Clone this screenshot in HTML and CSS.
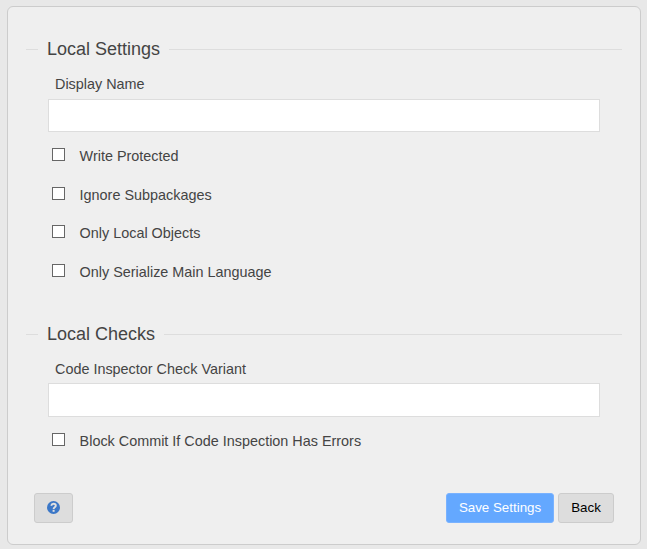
FILE: index.html
```html
<!DOCTYPE html>
<html lang="en">
<head>
  <meta charset="utf-8">
  <title>Local Settings</title>
  <link rel="stylesheet" href="styles.css">
</head>
<body>
  <form class="panel">
    <section class="group">
      <h2 class="legend">Local Settings</h2>
      <label class="field-label" for="display-name">Display Name</label>
      <input class="field" id="display-name" type="text">
      <div class="checks">
        <label class="check"><input type="checkbox">Write Protected</label>
        <label class="check"><input type="checkbox">Ignore Subpackages</label>
        <label class="check"><input type="checkbox">Only Local Objects</label>
        <label class="check"><input type="checkbox">Only Serialize Main Language</label>
      </div>
    </section>
    <section class="group">
      <h2 class="legend">Local Checks</h2>
      <label class="field-label" for="variant">Code Inspector Check Variant</label>
      <input class="field" id="variant" type="text">
      <div class="checks">
        <label class="check"><input type="checkbox">Block Commit If Code Inspection Has Errors</label>
      </div>
    </section>
    <div class="actions">
      <button class="button help" type="button">
        <svg width="13" height="13" viewBox="0 0 13 13">
          <circle cx="6.5" cy="6.5" r="6.5" fill="#3b77c7"/>
          <path d="M4.2 4.7C4.5 3.4 5.3 2.8 6.5 2.8C7.9 2.8 8.8 3.6 8.8 4.7C8.8 6.3 6.6 6.2 6.6 8" fill="none" stroke="#e0e0e0" stroke-width="1.9"/>
          <rect x="5.6" y="8.8" width="2" height="2" fill="#e0e0e0"/>
        </svg>
      </button>
      <button class="button save" type="button">Save Settings</button>
      <button class="button back" type="button">Back</button>
    </div>
  </form>
</body>
</html>
```
FILE: styles.css
```css
* {
  box-sizing: border-box;
}

body {
  margin: 0;
  padding: 6px 6px 4px 7px;
  height: 549px;
  background: #e8e8e8;
  color: #444;
  font-family: "Liberation Sans", Arial, sans-serif;
  font-size: 14.4px;
  line-height: 16px;
}

.panel {
  width: 634px;
  height: 539px;
  padding: 32px 18px 0;
  border: 1px solid #ccc;
  border-radius: 6px;
  background: #efefef;
}

.group {
  margin-bottom: 43.67px;
}

.legend {
  display: flex;
  gap: 9px;
  margin: 0 0 17px;
  font-size: 18px;
  font-weight: normal;
  line-height: 20px;
}

.legend::before,
.legend::after {
  content: "";
  height: 1px;
  margin-top: 10px;
  background: #ddd;
}

.legend::before {
  width: 12px;
}

.legend::after {
  flex: 1;
}

.field-label {
  display: block;
  margin: 0 0 6.67px 29px;
}

.field {
  display: block;
  width: 552px;
  height: 33.33px;
  margin: 0 0 16px 22px;
  padding: 0 8px;
  border: 1px solid #ddd;
  background: #fff;
}

.checks {
  display: flex;
  flex-direction: column;
  gap: 22.67px;
  margin-left: 26px;
}

.check {
  display: flex;
  gap: 14.6px;
}

.check input {
  appearance: none;
  width: 13px;
  height: 13px;
  margin: 0;
  border: 1px solid #666;
  background: #fff;
}

.actions {
  display: flex;
  gap: 4px;
  margin-top: 44.67px;
  padding: 0 8px;
}

.button {
  height: 30px;
  padding: 0 0 1px;
  border: 1px solid #ccc;
  border-radius: 3px;
  background: #ddd;
  color: #000;
  font-family: inherit;
  font-size: 13.333px;
}

.help {
  display: flex;
  align-items: center;
  justify-content: center;
  width: 39px;
  margin-right: auto;
}

.save {
  width: 108px;
  border-color: #79b2ff;
  background: #64a8ff;
  color: #fff;
}

.back {
  width: 56px;
}
```
